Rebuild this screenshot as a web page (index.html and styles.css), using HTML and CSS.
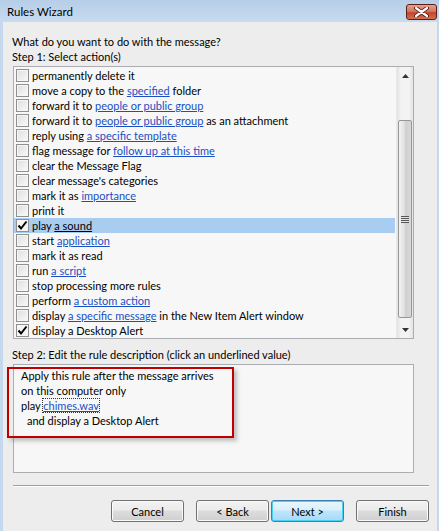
FILE: index.html
```html
<!DOCTYPE html>
<html>
<head>
<meta charset="utf-8">
<title>Rules Wizard</title>
<link rel="stylesheet" href="styles.css">
</head>
<body>
<div class="window">
  <div class="titlebar">
    <span class="title">Rules Wizard</span>
    <div class="close">
      <svg width="15" height="10" viewBox="0 0 15 10"><path d="M2 1 L13 9 M13 1 L2 9" stroke="#4a1a12" stroke-width="4" stroke-linecap="round"/><path d="M2 1 L13 9 M13 1 L2 9" stroke="#ffffff" stroke-width="2.2" stroke-linecap="round"/></svg>
    </div>
  </div>
  <div class="content">
    <div class="label">What do you want to do with the message?</div>
    <div class="label">Step 1: Select action(s)</div>
    <div class="listbox">
      <ul class="items">
        <li><span class="cb"></span><span class="txt">permanently delete it</span></li>
        <li><span class="cb"></span><span class="txt">move a copy to the <a>specified</a> folder</span></li>
        <li><span class="cb"></span><span class="txt">forward it to <a>people or public group</a></span></li>
        <li><span class="cb"></span><span class="txt">forward it to <a>people or public group</a> as an attachment</span></li>
        <li><span class="cb"></span><span class="txt">reply using <a>a specific template</a></span></li>
        <li><span class="cb"></span><span class="txt">flag message for <a>follow up at this time</a></span></li>
        <li><span class="cb"></span><span class="txt">clear the Message Flag</span></li>
        <li><span class="cb"></span><span class="txt">clear message's categories</span></li>
        <li><span class="cb"></span><span class="txt">mark it as <a>importance</a></span></li>
        <li><span class="cb"></span><span class="txt">print it</span></li>
        <li class="selected"><span class="cb checked"><svg width="11" height="11" viewBox="0 0 11 11"><path d="M1.5 5.5 L4 8.5 L9.5 1.5" fill="none" stroke="#000" stroke-width="2"/></svg></span><span class="txt">play <a>a sound</a></span></li>
        <li><span class="cb"></span><span class="txt">start <a>application</a></span></li>
        <li><span class="cb"></span><span class="txt">mark it as read</span></li>
        <li><span class="cb"></span><span class="txt">run <a>a script</a></span></li>
        <li><span class="cb"></span><span class="txt">stop processing more rules</span></li>
        <li><span class="cb"></span><span class="txt">perform <a>a custom action</a></span></li>
        <li><span class="cb"></span><span class="txt">display <a>a specific message</a> in the New Item Alert window</span></li>
        <li><span class="cb checked"><svg width="11" height="11" viewBox="0 0 11 11"><path d="M1.5 5.5 L4 8.5 L9.5 1.5" fill="none" stroke="#000" stroke-width="2"/></svg></span><span class="txt">display a Desktop Alert</span></li>
      </ul>
      <div class="scrollbar">
        <div class="sb-btn"><svg width="7" height="4" viewBox="0 0 7 4"><path d="M0 4 L3.5 0 L7 4 Z" fill="#333"/></svg></div>
        <div class="sb-track">
          <div class="thumb"><span class="grip"></span></div>
        </div>
        <div class="sb-btn"><svg width="7" height="4" viewBox="0 0 7 4"><path d="M0 0 L7 0 L3.5 4 Z" fill="#333"/></svg></div>
      </div>
    </div>
    <div class="label step2">Step 2: Edit the rule description (click an underlined value)</div>
    <div class="descbox">
      <div class="line">Apply this rule after the message arrives</div>
      <div class="line">on this computer only</div>
      <div class="line">play <a class="focus">chimes.wav</a></div>
      <div class="line indent">and display a Desktop Alert</div>
      <div class="annot"></div>
    </div>
    <div class="sep"></div>
    <div class="buttons">
      <div class="btn">Cancel</div>
      <div class="btn back">&lt; Back</div>
      <div class="btn default">Next &gt;</div>
      <div class="btn finish">Finish</div>
    </div>
  </div>
</div>
</body>
</html>
```

FILE: styles.css
```css
* { box-sizing: border-box; }
html, body { margin: 0; padding: 0; }
body {
  font-family: Lato, "Noto Sans", sans-serif;
  font-size: 11px;
  color: #000;
  background: #ececec;
}
.window {
  width: 439px;
  height: 531px;
  display: flex;
  flex-direction: column;
  background: #ededed;
  border-left: 3px solid #c4d8ee;
  border-right: 2px solid #c4d8ee;
}
.titlebar {
  height: 22px;
  margin: 0 -2px 0 -3px;
  padding: 0 2px 0 7px;
  display: flex;
  align-items: center;
  justify-content: space-between;
  background: linear-gradient(#b7cee8, #c7dbf0);
}
.title { font-size: 11.5px; padding-top: 1px; }
.close {
  width: 31px;
  height: 16px;
  margin-top: 1px;
  border: 1px solid #5a1f17;
  border-radius: 3px;
  background: linear-gradient(#e6a08e, #d27860 45%, #c2452c 55%, #d5704f);
  display: flex;
  align-items: center;
  justify-content: center;
}
.content {
  flex: 1;
  padding: 12px 8px 0 10px;
  display: flex;
  flex-direction: column;
}
.label { line-height: 15px; height: 15px; margin-left: -1px; white-space: nowrap; }
.listbox {
  margin-top: 2px;
  width: 401px;
  height: 273px;
  border: 1px solid #abadb3;
  background: #f7f7f7;
  display: flex;
}
.items {
  list-style: none;
  margin: 0;
  padding: 1px 0 0 0;
  flex: 1;
}
.items li {
  height: 15px;
  line-height: 15px;
  display: flex;
  align-items: center;
  padding-left: 2px;
  white-space: nowrap;
}
.txt { white-space: pre; }
.items li.selected { background: #a9cdf1; margin-right: 1px; }
.items li.selected a { color: #000; }
a { color: #1a4fc4; text-decoration: underline; }
.cb {
  width: 13px;
  height: 13px;
  border: 1px solid #8e8f8f;
  background: linear-gradient(135deg, #dedede, #fafafa);
  box-shadow: inset 0 0 0 1px #f6f6f6;
  margin-right: 3px;
  flex: none;
  display: flex;
  align-items: center;
  justify-content: center;
}
.cb.checked { background: #f4f4f4; }
.scrollbar {
  width: 17px;
  display: flex;
  flex-direction: column;
  background: linear-gradient(90deg, #e2e2e2, #f3f3f3 25%, #f3f3f3 75%, #e4e4e4);
  border-left: 1px solid #e8e8e8;
}
.sb-btn {
  height: 17px;
  display: flex;
  align-items: center;
  justify-content: center;
}
.sb-track { flex: 1; padding: 36px 1px 0 1px; }
.thumb {
  height: 198px;
  border: 1px solid #979797;
  border-radius: 2px;
  background: linear-gradient(90deg, #f2f2f2, #e0e0e0 45%, #cfcfcf 55%, #d9d9d9);
  display: flex;
  align-items: center;
  justify-content: center;
}
.grip {
  width: 8px;
  height: 7px;
  background: repeating-linear-gradient(#555 0 1px, #e6e6e6 1px 2px);
}
.step2 { margin-top: 8px; }
.descbox {
  position: relative;
  margin-top: 2px;
  width: 401px;
  height: 109px;
  border: 1px solid #abadb3;
  background: #f7f7f7;
  padding: 3px 0 0 7px;
}
.line { height: 15px; line-height: 15px; white-space: nowrap; }
.line.indent { padding-left: 6px; }
.focus { outline: 1px dotted #333; outline-offset: 0; }
.annot {
  position: absolute;
  left: -7px;
  top: 2px;
  width: 227px;
  height: 71px;
  border: 2px solid #c00000;
  box-shadow: 3px 3px 4px rgba(120,120,120,0.45);
}
.sep {
  margin-top: 12px;
  height: 2px;
  border-top: 1px solid #a0a0a0;
  border-bottom: 1px solid #ffffff;
}
.buttons {
  margin-top: 13px;
  display: flex;
  justify-content: flex-end;
}
.btn {
  width: 73px;
  height: 22px;
  border: 1px solid #707070;
  border-radius: 3px;
  background: linear-gradient(#f2f2f2, #ebebeb 45%, #dddddd 50%, #cfcfcf);
  box-shadow: inset 0 0 0 1px #fbfbfb;
  display: flex;
  align-items: center;
  justify-content: center;
  line-height: 15px;
}
.btn.back { margin-left: 12px; }
.btn.default {
  margin-left: 2px;
  border-color: #3c7fb1;
  box-shadow: inset 0 0 0 1px #48d0f6;
  background: linear-gradient(#eaf6fd, #d9f0fc 45%, #bee6fd 50%, #a7d9f5);
}
.btn.finish { margin-left: 12px; }
```
